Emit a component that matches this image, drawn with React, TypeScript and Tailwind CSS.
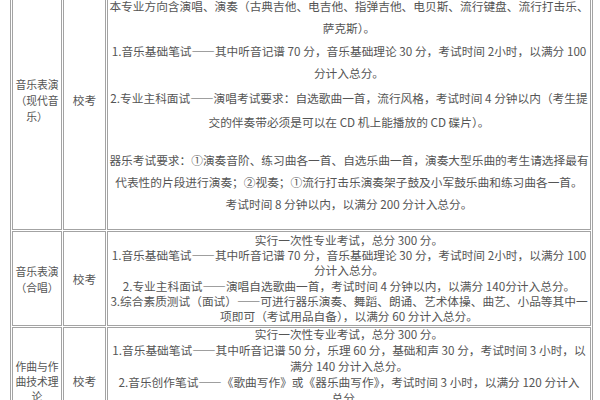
import type { ReactNode } from 'react';

const FONT = "font-['Noto_Sans_CJK_SC','Liberation_Sans',sans-serif]";

function NameCell({ lines, height, leading }: { lines: string[]; height: string; leading: string }) {
  return (
    <td className="border border-[#a3a3a3] p-0 align-middle">
      <div className={`flex w-[48px] flex-col items-center justify-center text-[10.8px] ${height} ${leading}`}>
        {lines.map(l => (
          <span key={l} className="whitespace-nowrap">{l}</span>
        ))}
      </div>
    </td>
  );
}

function TypeCell({ height }: { height: string }) {
  return (
    <td className="border border-[#a3a3a3] p-0 align-middle">
      <div className={`flex w-[41px] items-center justify-center ${height}`}>校考</div>
    </td>
  );
}

function DetailCell({ height, className, children }: { height: string; className?: string; children: ReactNode }) {
  return (
    <td className="border border-[#a3a3a3] p-0 align-top">
      <div className={`w-[482px] text-center whitespace-nowrap ${height} ${className ?? ''}`}>{children}</div>
    </td>
  );
}

export default function App() {
  return (
    <div lang="zh-CN" className={`h-[400px] w-[600px] overflow-hidden bg-white text-[11.7px] text-[#555] ${FONT}`}>
      <table className="-mt-[32px] ml-[10px] border-separate border-spacing-[1px] border border-[#a3a3a3]">
        <tbody>
          {/* 现代音乐 */}
          <tr>
            <NameCell lines={['音乐表演', '（现代音', '乐）']} height="h-[258px]" leading="leading-[16px]" />
            <TypeCell height="h-[258px]" />
            <DetailCell height="h-[258px]" className="pt-[24px] leading-[22px]">
              <div>本专业方向含演唱、演奏（古典吉他、电吉他、指弹吉他、电贝斯、流行键盘、流行打击乐、</div>
              <div>萨克斯）。</div>
              <div className="mt-[1px]">1.音乐基础笔试——其中听音记谱 70 分，音乐基础理论 30 分，考试时间 2小时，以满分 100</div>
              <div>分计入总分。</div>
              <div className="mt-[3px]">2.专业主科面试——演唱考试要求：自选歌曲一首，流行风格，考试时间 4 分钟以内（考生提</div>
              <div className="mt-[2px]">交的伴奏带必须是可以在 CD 机上能播放的 CD 碟片）。</div>
              <div className="mt-[16px]">器乐考试要求：①演奏音阶、练习曲各一首、自选乐曲一首，演奏大型乐曲的考生请选择最有</div>
              <div>代表性的片段进行演奏；②视奏；①流行打击乐演奏架子鼓及小军鼓乐曲和练习曲各一首。</div>
              <div>考试时间 8 分钟以内，以满分 200 分计入总分。</div>
            </DetailCell>
          </tr>

          {/* 合唱 */}
          <tr>
            <NameCell lines={['音乐表演', '（合唱）']} height="h-[93px]" leading="leading-[16px]" />
            <TypeCell height="h-[93px]" />
            <DetailCell height="h-[93px]" className="leading-[15.2px]">
              <div>实行一次性专业考试，总分 300 分。</div>
              <div>1.音乐基础笔试——其中听音记谱 70 分，音乐基础理论 30 分，考试时间 2小时，以满分 100</div>
              <div>分计入总分。</div>
              <div>2.专业主科面试——演唱自选歌曲一首，考试时间 4 分钟以内，以满分 140分计入总分。</div>
              <div>3.综合素质测试（面试）——可进行器乐演奏、舞蹈、朗诵、艺术体操、曲艺、小品等其中一</div>
              <div>项即可（考试用品自备），以满分 60 分计入总分。</div>
            </DetailCell>
          </tr>

          {/* 作曲 */}
          <tr>
            <NameCell lines={['作曲与作', '曲技术理', '论']} height="h-[106px]" leading="leading-[15px]" />
            <TypeCell height="h-[106px]" />
            <DetailCell height="h-[106px]" className="leading-[16px]">
              <div className="-mt-[2px]">实行一次性专业考试，总分 300 分。</div>
              <div>1.音乐基础笔试——其中听音记谱 50 分，乐理 60 分，基础和声 30 分，考试时间 3 小时，以</div>
              <div>满分 140 分计入总分。</div>
              <div>2.音乐创作笔试——《歌曲写作》或《器乐曲写作》，考试时间 3 小时，以满分 120 分计入</div>
              <div>总分。</div>
            </DetailCell>
          </tr>
        </tbody>
      </table>
    </div>
  );
}
